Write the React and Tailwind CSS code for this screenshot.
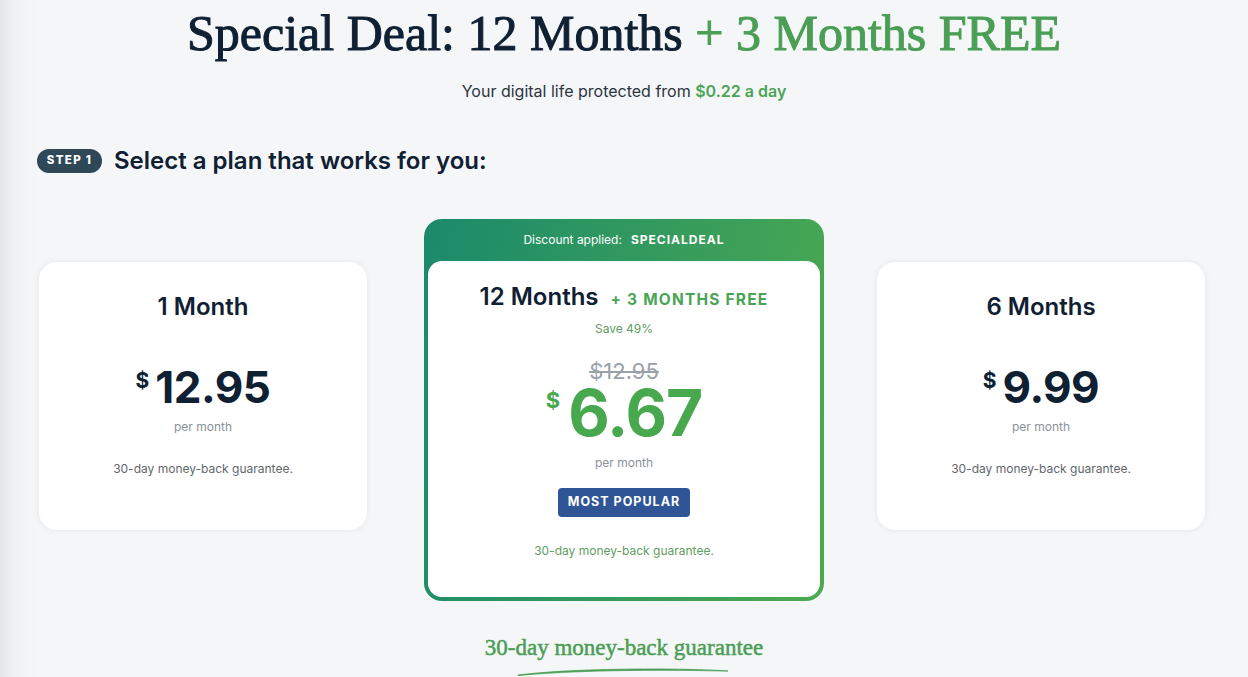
import { useState } from "react"

const plans = [
  { id: "1m", title: "1 Month", price: "12.95" },
  { id: "6m", title: "6 Months", price: "9.99" },
]

function SideCard({ plan }) {
  return (
    <div className="mt-[43px] flex h-[268px] w-[328px] flex-col items-center rounded-[18px] bg-white shadow-[0_0_6px_rgba(15,32,51,0.08)]">
      <h2 className="mt-[33px] text-[24px] leading-[24px] font-semibold text-[#0f2033]">
        {plan.title}
      </h2>

      <div className="mt-[49px] flex items-start text-[#0f2033]">
        <span className="mt-[2px] mr-[6px] text-[21px] leading-none font-bold">$</span>
        <span className="text-[44px] leading-[38px] font-bold tracking-[-0.5px]">
          {plan.price}
        </span>
      </div>

      <p className="mt-[12px] text-[12px] text-[#8a9299]">per month</p>
      <p className="mt-[24px] text-[12px] text-[#5f676e]">
        30-day money-back guarantee.
      </p>
    </div>
  )
}

function FeaturedCard() {
  return (
    <div className="mr-[53px] ml-[57px] w-[400px] shrink-0 rounded-[18px] bg-[linear-gradient(100deg,#1b8a6b,#4caa50)] px-[4px] pb-[4px]">
      <div className="flex h-[42px] items-center justify-center gap-[9px] text-[12px] text-white">
        <span>Discount applied:</span>
        <span className="font-bold tracking-[1px]">SPECIALDEAL</span>
      </div>

      <div className="flex h-[336px] flex-col items-center rounded-[14px] bg-white">
        <div className="mt-[22px] flex items-baseline gap-[12px]">
          <h2 className="text-[24px] leading-[28px] font-semibold text-[#0f2033]">
            12 Months
          </h2>
          <span className="text-[15.5px] font-bold tracking-[1.2px] text-[#4aa456]">
            + 3 MONTHS FREE
          </span>
        </div>

        <p className="mt-[9px] text-[12px] text-[#5f9d62]">Save 49%</p>

        <p className="mt-[23px] text-[22px] leading-[20px] text-[#9aa1a7] line-through decoration-[2px]">
          $12.95
        </p>

        <div className="mt-[7px] flex items-start text-[#47a84d]">
          <span className="mt-[1px] mr-[8px] text-[22px] leading-none font-bold">$</span>
          <span className="text-[64px] leading-[50px] font-bold tracking-[-1px]">6.67</span>
        </div>

        <p className="mt-[16px] text-[12px] text-[#8a9299]">per month</p>

        <button className="mt-[16px] h-[29px] rounded-[4px] bg-[#2f5597] px-[10px] text-[12.5px] font-bold tracking-[1px] text-white">
          MOST POPULAR
        </button>

        <p className="mt-[25px] text-[12px] text-[#5f9d62]">
          30-day money-back guarantee.
        </p>
      </div>
    </div>
  )
}

export default function App() {
  const [selected] = useState("12m")

  return (
    <div
      className="min-h-screen bg-[linear-gradient(to_right,#e4e6e9,#f1f2f4_14px,#f5f6f8_40px)] font-['Inter',sans-serif]"
      data-selected={selected}
    >
      <h1 className="pt-[6px] text-center font-['Liberation_Serif',serif] text-[50px] leading-[54px] font-normal text-[#0f2033] [-webkit-text-stroke:1px]">
        Special Deal: 12 Months <span className="text-[#4a9e55]">+ 3 Months FREE</span>
      </h1>

      <p className="mt-[19px] text-center text-[16px] text-[#2a3540]">
        Your digital life protected from{" "}
        <span className="font-semibold text-[#4aa456]">$0.22 a day</span>
      </p>

      <section className="pl-[39px]">
        <div className="mt-[42px] flex items-center gap-[12px]">
          <span className="ml-[-2px] flex h-[24px] w-[65px] items-center justify-center rounded-full bg-[#2f4858] text-[11.5px] font-extrabold tracking-[1.3px] text-white">
            STEP 1
          </span>
          <h2 className="text-[24px] leading-[32px] font-semibold text-[#0f2033]">
            Select a plan that works for you:
          </h2>
        </div>

        <div className="mt-[42px] flex items-start">
          <SideCard plan={plans[0]} />
          <FeaturedCard />
          <SideCard plan={plans[1]} />
        </div>
      </section>

      <div className="mt-[32px] flex flex-col items-center">
        <p className="font-['Liberation_Serif',serif] text-[23px] leading-[30px] text-[#4a9e55] [-webkit-text-stroke:0.5px]">
          30-day money-back guarantee
        </p>
        <svg width="220" height="10" viewBox="0 0 220 10" className="mt-[3px]">
          <path
            d="M4 9 C 40 4.5, 90 3, 140 3 C 175 3, 200 4, 214 5 C 200 5, 175 4.2, 140 4.3 C 90 4.5, 40 6, 4 9.6 Z"
            fill="#4a9e55"
            stroke="#4a9e55"
            strokeWidth="0.8"
            strokeLinejoin="round"
          />
        </svg>
      </div>
    </div>
  )
}
